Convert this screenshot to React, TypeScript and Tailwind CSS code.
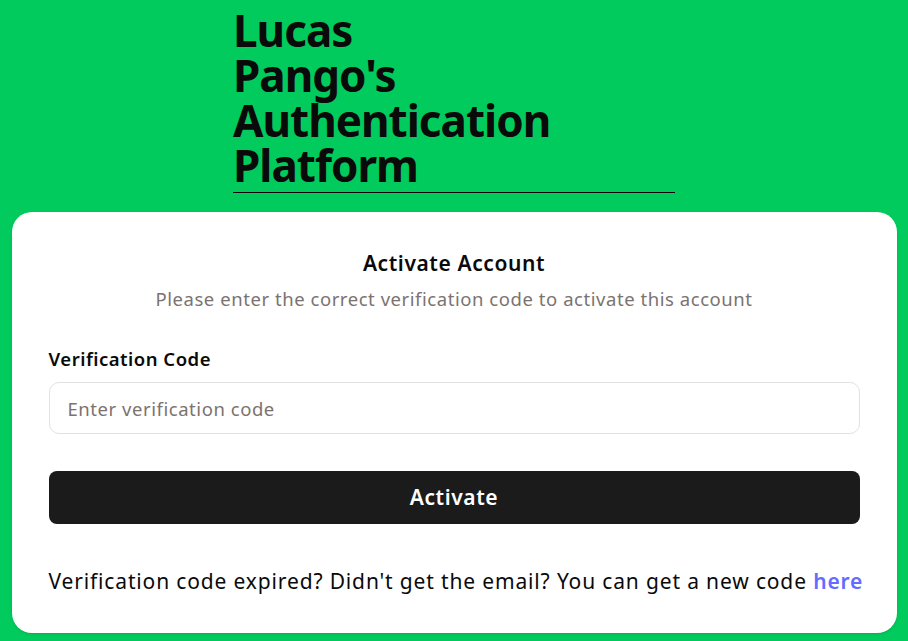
import React from "react";

export default function App() {
  return (
    <div
      className="min-h-[641px] w-full bg-[#02cb5d] flex flex-col items-center pt-[8px]"
      style={{ fontFamily: '"Noto Sans", "Open Sans", sans-serif' }}
    >
      <div className="w-[442px] border-b border-black pb-[4px]">
        <h1 className="text-[44px] font-bold leading-[45px] text-[#0a0a0a] tracking-[-1px]">
          <span className="block">Lucas</span>
          <span className="block">Pango's</span>
          <span className="block">Authentication</span>
          <span className="block">Platform</span>
        </h1>
      </div>
      <div className="mt-[19px] w-[885px] bg-white rounded-[20px] px-[37px] pt-[36px] pb-[37px] shadow-sm">
        <div className="text-center">
          <h2 className="text-[21px] font-semibold text-[#0a0a0a] leading-[30px] tracking-[0.6px]">
            Activate Account
          </h2>
          <p className="mt-[8px] text-[18.5px] text-[#7b7370] leading-[26px] tracking-[0.55px]">
            Please enter the correct verification code to activate this account
          </p>
        </div>
        <label className="block mt-[34px] text-[18.5px] font-semibold text-[#0a0a0a] leading-[26px] tracking-[0.5px]">
          Verification Code
        </label>
        <input
          className="mt-[10px] block w-full h-[52px] rounded-[10px] border border-[#e2e2e2] px-[18px] text-[18.5px] tracking-[0.55px] text-[#0a0a0a] placeholder:text-[#7b7370] outline-none"
          placeholder="Enter verification code"
        />
        <button className="mt-[37px] block w-full h-[53px] rounded-[8px] bg-[#1b1b1b] text-white text-[21px] font-semibold tracking-[0.6px]">
          Activate
        </button>
        <p className="mt-[42px] text-[21px] text-[#0a0a0a] leading-[30px] tracking-[0.85px] whitespace-nowrap">
          Verification code expired? Didn't get the email? You can get a new code{" "}
          <a className="text-[#646cff] font-semibold cursor-pointer">here</a>
        </p>
      </div>
    </div>
  );
}
